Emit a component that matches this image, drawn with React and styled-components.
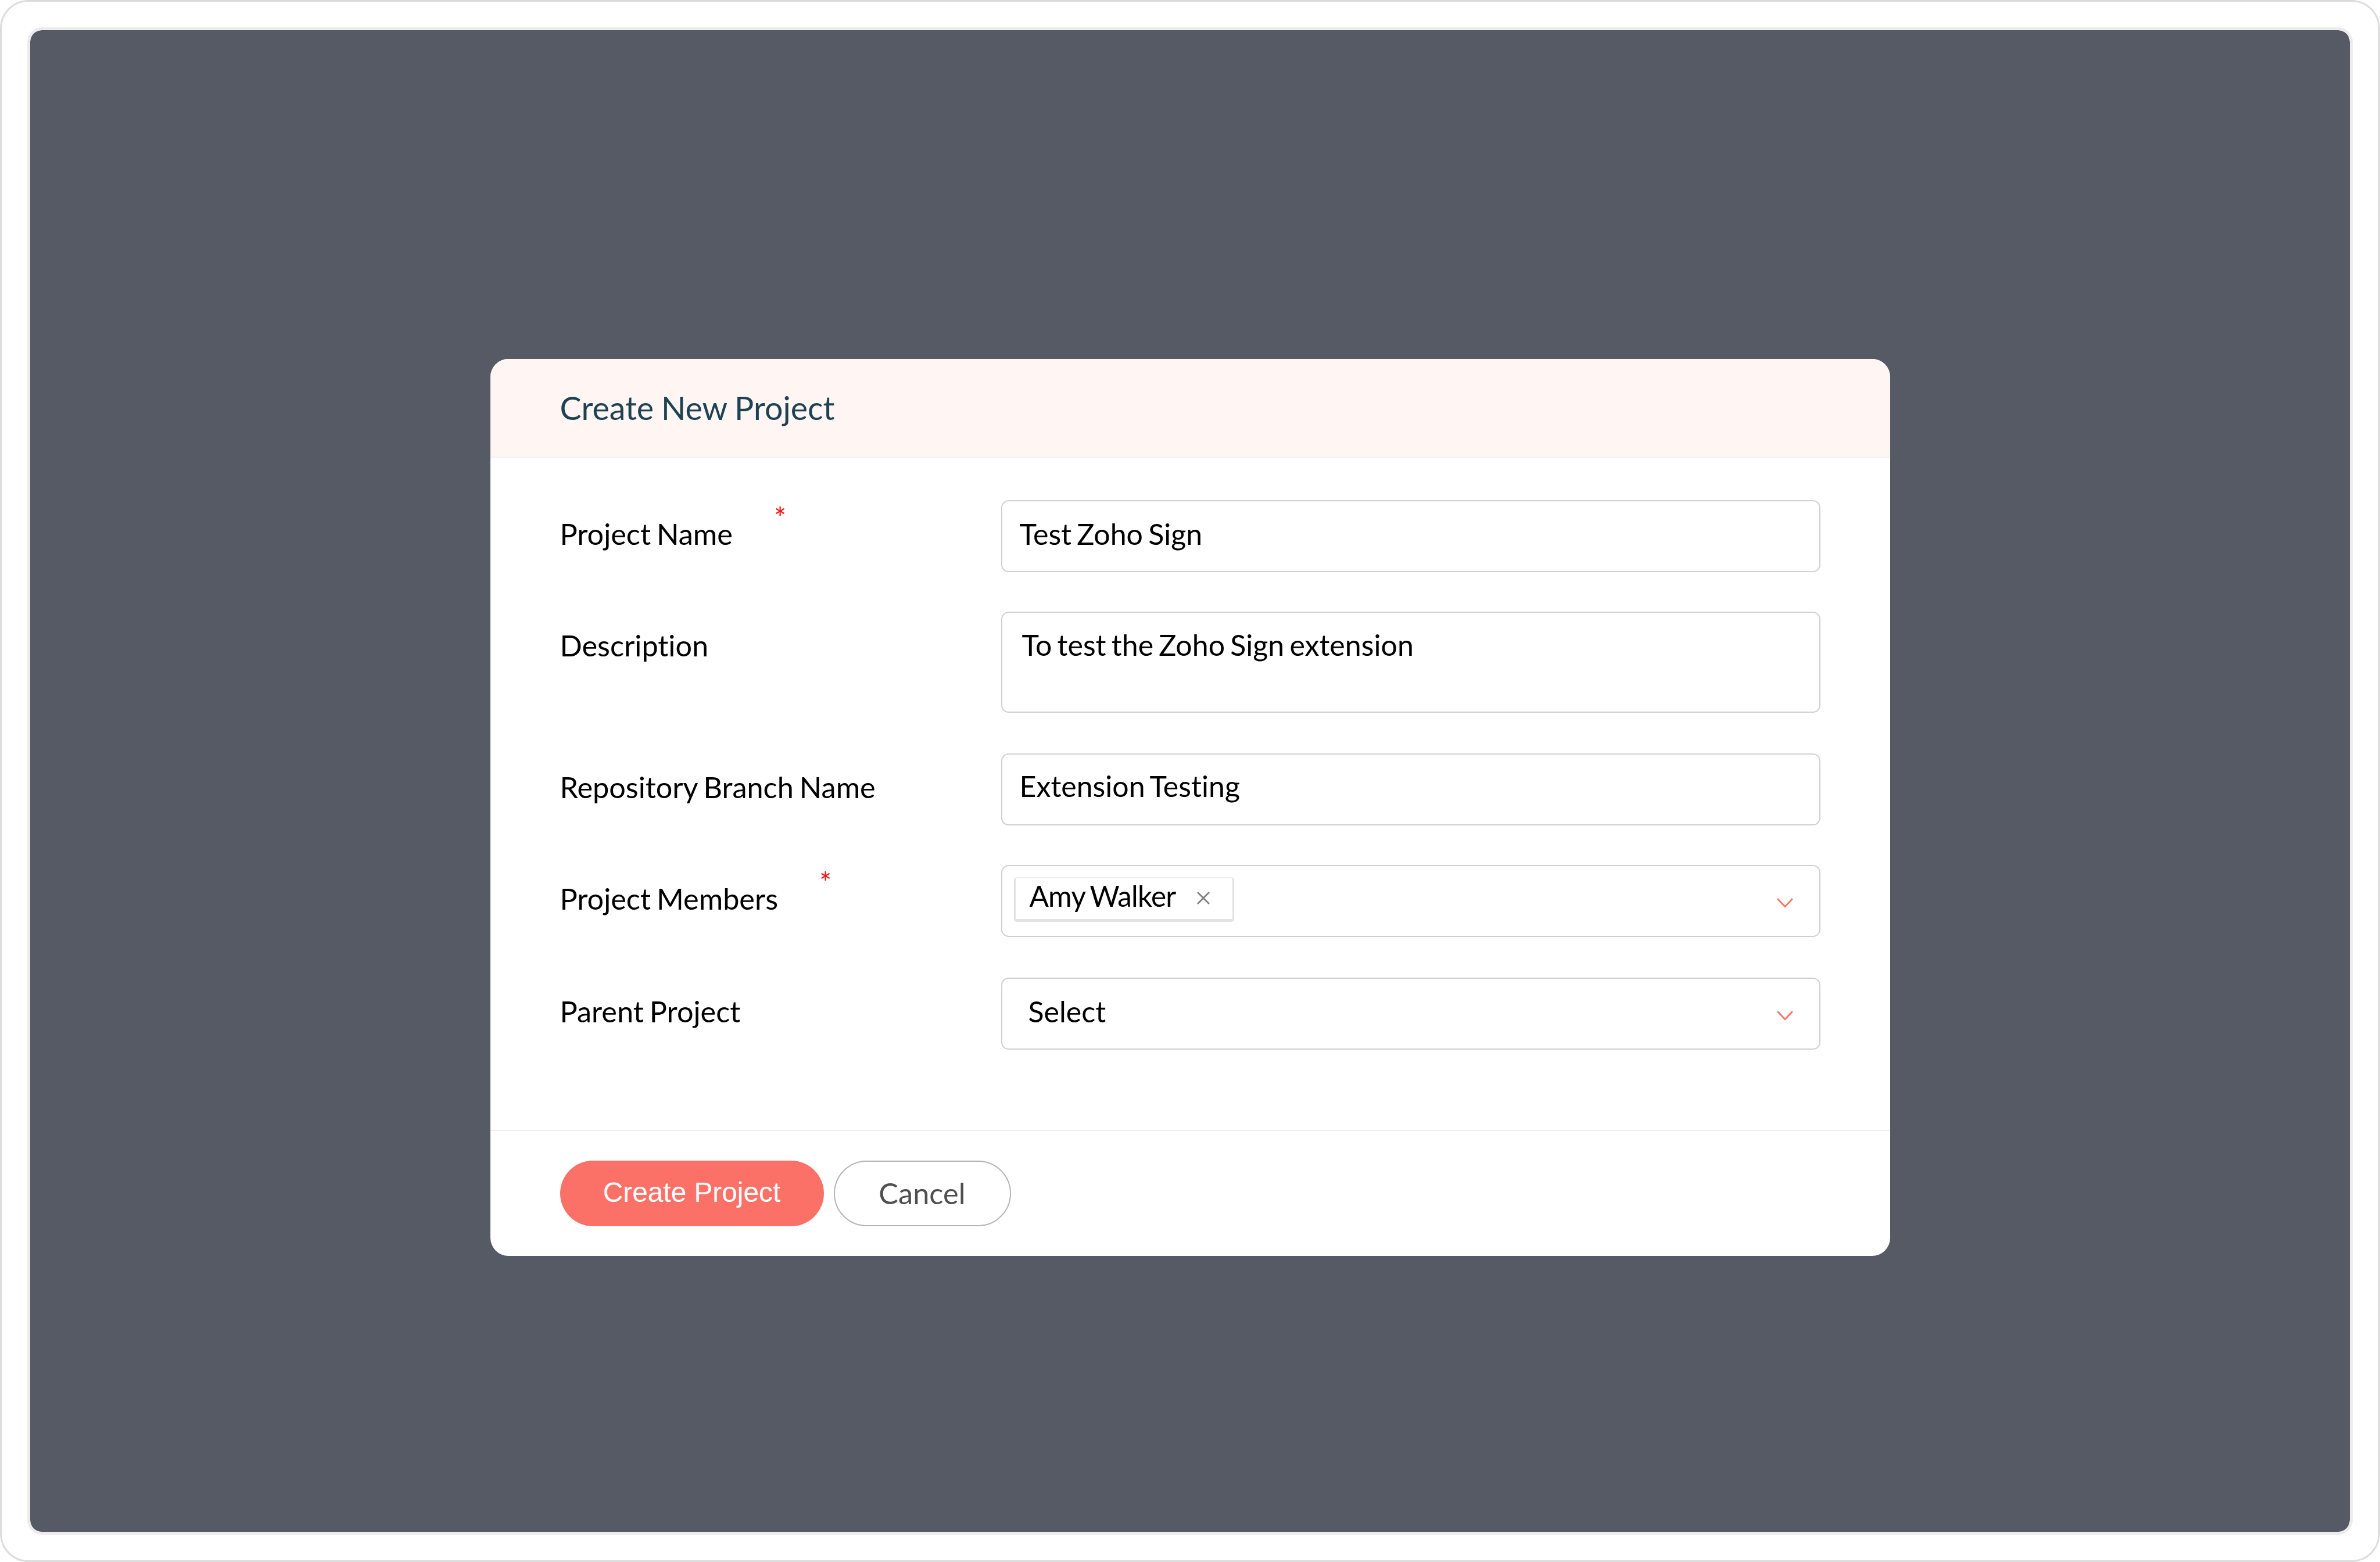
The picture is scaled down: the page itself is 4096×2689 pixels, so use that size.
// src/App.jsx
import styled, { createGlobalStyle } from 'styled-components';

const GlobalStyle = createGlobalStyle`
  * {
    box-sizing: border-box;
  }

  body {
    margin: 0;
    background: #ffffff;
    font-family: Lato, 'Open Sans', sans-serif;
    font-variant-ligatures: none;
    color: #000000;
  }
`;

const Frame = styled.div`
  width: 4096px;
  height: 2689px;
  padding: 44px;
  border: 3px solid #dcdcdc;
  border-radius: 49px;
  background: #ffffff;
`;

const Backdrop = styled.div`
  display: flex;
  justify-content: center;
  align-items: flex-start;
  height: 100%;
  padding-top: 566px;
  border: 5px solid #ececec;
  border-radius: 25px;
  background: #565a64;
  background-clip: padding-box;
`;

const Dialog = styled.section`
  display: flex;
  flex-direction: column;
  width: 2409px;
  height: 1544px;
  border-radius: 31px;
  background: #ffffff;
  overflow: hidden;
`;

const DialogHeader = styled.header`
  display: flex;
  align-items: center;
  height: 170px;
  padding: 0 120px;
  border-bottom: 2px solid #f2f2f2;
  background: #fff5f3;
`;

const Title = styled.h1`
  margin: 0;
  font-size: 55.5px;
  font-weight: 400;
  line-height: 66px;
  word-spacing: -1.2px;
  color: #1e4252;
`;

const Form = styled.div`
  flex: 1;
  display: grid;
  grid-template-columns: 759px 1410px;
  grid-template-rows: 192px 244px 192px 194px 124px;
  align-items: start;
  padding: 73px 120px 0;
`;

const Label = styled.label`
  display: flex;
  align-items: flex-start;
  gap: 71px;
  font-size: 50.4px;
  line-height: 60px;
  word-spacing: -2.8px;
  white-space: nowrap;
`;

const LabelText = styled.span`
  padding-top: 28px;
`;

const Required = styled.span`
  font-size: 50px;
  color: #ff0f0f;
`;

const Control = styled.div`
  display: flex;
  align-items: flex-start;
  justify-content: space-between;
  height: ${(props) => (props.$tall ? 174 : 124)}px;
  padding: ${(props) => props.$padding || '24px 45px 0 30px'};
  border: 2px solid #d0d0d0;
  border-radius: 13px;
  background: #ffffff;
  font-size: 50.1px;
  line-height: 60px;
  word-spacing: -3.6px;
`;

const Chip = styled.span`
  display: flex;
  align-items: flex-start;
  gap: 37px;
  width: 379px;
  height: 77px;
  padding: 0 0 0 24px;
  border: solid #e2e2e2;
  border-width: 2px 3px 5px;
  border-top-color: #f0f0f0;
  border-radius: 5px;
  font-size: 49.5px;
  line-height: 60px;
  letter-spacing: -0.8px;
  word-spacing: -2.5px;
`;

const CloseIcon = styled.svg`
  width: 22px;
  height: 22px;
  margin-top: 23px;
  stroke: #808080;
  stroke-width: 2.8;
  fill: none;
`;

const ChevronIcon = styled.svg`
  width: 28px;
  height: 17px;
  margin-top: ${(props) => props.$offset}px;
  stroke: #fb7067;
  stroke-width: 2.8;
  fill: none;
`;

const DialogFooter = styled.footer`
  display: flex;
  align-items: flex-start;
  gap: 17px;
  height: 217px;
  padding: 51px 120px 0;
  border-top: 2px solid #f0f0f0;
`;

const Button = styled.button`
  height: 113px;
  width: 305px;
  padding: 0 0 2px;
  border: 2px solid #b4b4b4;
  border-radius: 57px;
  background: #ffffff;
  font-family: inherit;
  font-size: 50.5px;
  line-height: 60px;
  color: #4f4f4f;
`;

const PrimaryButton = styled(Button)`
  width: 454px;
  padding: 0 0 4px;
  border: none;
  background: #fb7067;
  font-family: 'Liberation Sans', Arial, sans-serif;
  font-size: 47.8px;
  color: #ffffff;
`;

function FieldLabel({ children, required }) {
  return (
    <Label>
      <LabelText>{children}</LabelText>
      {required && <Required>*</Required>}
    </Label>
  );
}

function Chevron({ offset }) {
  return (
    <ChevronIcon viewBox="0 0 28 17" $offset={offset}>
      <path d="M1.2 1.2 14 14.6 26.8 1.2" />
    </ChevronIcon>
  );
}

function App() {
  return (
    <>
      <GlobalStyle />
      <Frame>
        <Backdrop>
          <Dialog>
            <DialogHeader>
              <Title>Create New Project</Title>
            </DialogHeader>

            <Form>
              <FieldLabel required>Project Name</FieldLabel>
              <Control $padding="26px 45px 0 30px">Test Zoho Sign</Control>

              <FieldLabel>Description</FieldLabel>
              <Control $tall $padding="25px 45px 0 34px">
                To test the Zoho Sign extension
              </Control>

              <FieldLabel>Repository Branch Name</FieldLabel>
              <Control>Extension Testing</Control>

              <FieldLabel required>Project Members</FieldLabel>
              <Control $padding="19px 45px 0 20px">
                <Chip>
                  Amy Walker
                  <CloseIcon viewBox="0 0 22 22">
                    <path d="M1 1 21 21M21 1 1 21" />
                  </CloseIcon>
                </Chip>
                <Chevron offset={36} />
              </Control>

              <FieldLabel>Parent Project</FieldLabel>
              <Control $padding="26px 45px 0">
                Select
                <Chevron offset={29} />
              </Control>
            </Form>

            <DialogFooter>
              <PrimaryButton type="button">Create Project</PrimaryButton>
              <Button type="button">Cancel</Button>
            </DialogFooter>
          </Dialog>
        </Backdrop>
      </Frame>
    </>
  );
}

export default App;
